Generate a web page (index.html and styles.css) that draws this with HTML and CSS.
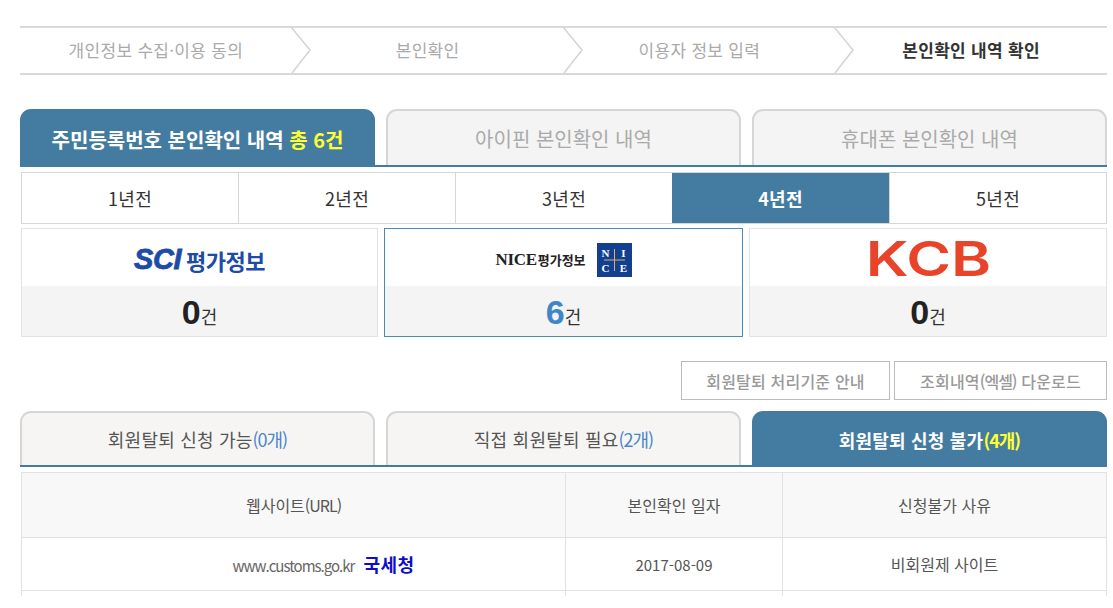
FILE: index.html
```html
<!DOCTYPE html>
<html lang="ko">
<head>
<meta charset="utf-8">
<title>본인확인 내역 확인</title>
<link rel="stylesheet" href="styles.css">
</head>
<body>
<div class="page">
  <ol class="steps">
    <li class="step">개인정보 수집·이용 동의<svg class="chev" width="22" height="46" viewBox="0 0 22 46"><path d="M1 0 L20 23 L2 46" fill="none" stroke="#d4d4d4" stroke-width="1.5"/></svg></li>
    <li class="step">본인확인<svg class="chev" width="22" height="46" viewBox="0 0 22 46"><path d="M1 0 L20 23 L2 46" fill="none" stroke="#d4d4d4" stroke-width="1.5"/></svg></li>
    <li class="step">이용자 정보 입력<svg class="chev" width="22" height="46" viewBox="0 0 22 46"><path d="M1 0 L20 23 L2 46" fill="none" stroke="#d4d4d4" stroke-width="1.5"/></svg></li>
    <li class="step step-on">본인확인 내역 확인</li>
  </ol>

  <div class="tabs tabs-main">
    <div class="tab tab-on">주민등록번호 본인확인 내역&nbsp;<em class="hl">총 6건</em></div>
    <div class="tab">아이핀 본인확인 내역</div>
    <div class="tab">휴대폰 본인확인 내역</div>
  </div>

  <div class="years">
    <div class="year">1년전</div>
    <div class="year">2년전</div>
    <div class="year">3년전</div>
    <div class="year year-on">4년전</div>
    <div class="year">5년전</div>
  </div>

  <div class="cards">
    <div class="card">
      <div class="logo logo-sci"><span class="sci-a">SCI</span><span class="sci-b">평가정보</span></div>
      <div class="count"><b>0</b>건</div>
    </div>
    <div class="card card-on">
      <div class="logo logo-nice">
        <span class="nice-a">NICE</span><span class="nice-b">평가정보</span>
        <svg class="nice-mark" width="35" height="34" viewBox="0 0 35 34">
          <rect width="35" height="34" fill="#123f8f"/>
          <path d="M17.5 6V28M7 17H28" stroke="#d9b45a" stroke-width="1"/>
          <text x="8.500" y="14" class="nice-t">N</text>
          <text x="26.500" y="14" class="nice-t">I</text>
          <text x="8.500" y="29" class="nice-t">C</text>
          <text x="26.500" y="29" class="nice-t">E</text>
        </svg>
      </div>
      <div class="count count-on"><b>6</b>건</div>
    </div>
    <div class="card">
      <div class="logo logo-kcb"><span class="kcb">KCB</span></div>
      <div class="count"><b>0</b>건</div>
    </div>
  </div>

  <div class="actions">
    <a class="btn btn-a">회원탈퇴 처리기준 안내</a>
    <a class="btn btn-b"><span>조회내역<span class="tight">(엑셀)</span> 다운로드</span></a>
  </div>

  <div class="tabs tabs-sub">
    <div class="tab">회원탈퇴 신청 가능<span class="num">(0개)</span></div>
    <div class="tab">직접 회원탈퇴 필요<span class="num">(2개)</span></div>
    <div class="tab tab-on">회원탈퇴 신청 불가<span class="num-on">(4개)</span></div>
  </div>

  <table class="list">
    <colgroup><col class="c1"><col class="c2"><col class="c3"></colgroup>
    <thead>
      <tr><th>웹사이트<span class="tight">(URL)</span></th><th>본인확인 일자</th><th>신청불가 사유</th></tr>
    </thead>
    <tbody>
      <tr><td class="site"><span class="url">www.customs.go.kr</span><strong class="org">국세청</strong></td><td class="date">2017-08-09</td><td>비회원제 사이트</td></tr>
      <tr class="cut"><td></td><td></td><td></td></tr>
    </tbody>
  </table>
</div>
</body>
</html>
```
FILE: styles.css
```css
* { box-sizing: border-box; }
html, body { margin: 0; padding: 0; background: #fff; }
body {
  font-family: "Noto Sans CJK KR", "Noto Sans", sans-serif;
  color: #333;
}
.page {
  width: 1113px;
  height: 596px;
  padding: 26px 6px 0 20px;
  overflow: hidden;
}

.steps {
  list-style: none;
  margin: 0;
  padding: 0;
  height: 49px;
  display: grid;
  grid-template-columns: repeat(4, 1fr);
  border-top: 2px solid #d9d9d9;
  border-bottom: 2px solid #d9d9d9;
}
.step {
  position: relative;
  display: flex;
  align-items: center;
  justify-content: center;
  padding-bottom: 2px;
  font-size: 17px;
  letter-spacing: 0.3px;
  color: #aaa;
}
.step-on { color: #333; font-weight: 700; }
.chev { position: absolute; right: -20px; top: -1px; }

.tabs { display: grid; grid-template-columns: repeat(3, 355px); column-gap: 11px; }
.tabs-main { height: 58px; margin-top: 34px; border-bottom: 2px solid #437ca0; }
.tabs-sub { height: 56px; margin-top: 11px; border-bottom: 2px solid #437ca0; }
.tab {
  display: flex;
  align-items: center;
  justify-content: center;
  border: 2px solid #d6d6d6;
  border-bottom: 0;
  border-radius: 11px 11px 0 0;
  background: #f4f4f4;
  color: #aaa;
  font-size: 20px;
}
.tabs .tab-on {
  background: #437ca0;
  border-color: #437ca0;
  color: #fff;
  font-weight: 700;
  margin-bottom: -2px;
}
.hl { font-style: normal; color: #ffff33; }
.tabs-sub .tab { font-size: 18px; color: #555; background: #f6f5f3; letter-spacing: 0.2px; }
.tabs-sub .tab-on { color: #fff; background: #437ca0; }
.num { color: #4a86c8; letter-spacing: -1px; }
.num-on { color: #ffff33; letter-spacing: -1px; }

.years {
  display: grid;
  grid-template-columns: 216px 217px 217px 217px 1fr;
  height: 52px;
  margin: 5px 0 0 1px;
  border: 1px solid #d6d6d6;
}
.year {
  display: flex;
  align-items: center;
  justify-content: center;
  font-size: 18px;
  letter-spacing: 0.3px;
  color: #333;
  border-left: 1px solid #d6d6d6;
}
.year:first-child { border-left: 0; }
.year-on { background: #437ca0; color: #fff; font-weight: 700; border-left: 0; }

.cards {
  display: grid;
  grid-template-columns: 357px 359px 358px;
  column-gap: 6px;
  height: 108px;
  margin: 4px 0 0 1px;
}
.card { display: flex; flex-direction: column; border: 1px solid #e2e2e2; background: #fff; }
.card-on { border-color: #4a8ab8; }
.logo { height: 57px; display: flex; align-items: center; justify-content: center; }
.count {
  flex: 1;
  display: flex;
  align-items: baseline;
  justify-content: center;
  padding-top: 6px;
  background: #f4f4f4;
  font-size: 18px;
  line-height: 40px;
  color: #333;
}
.count b { font: 700 34px/40px "Liberation Sans", sans-serif; color: #222; }
.count-on b { color: #3f86c8; }

.logo-sci { gap: 5px; color: #1d4ba6; padding-top: 4px; }
.sci-a { font: italic 900 29px/1 "Liberation Sans", sans-serif; -webkit-text-stroke: 0.8px #1d4ba6; letter-spacing: -0.5px; }
.sci-b { font-size: 22px; font-weight: 700; letter-spacing: -0.5px; }
.logo-nice { padding-top: 4px; }
.nice-a { font: 700 17px/1 "Liberation Serif", serif; color: #222; letter-spacing: -0.3px; }
.nice-b { font: 700 13px/1 "Noto Sans CJK KR", serif; color: #222; margin-left: 1px; }
.nice-mark { margin-left: 11px; }
.nice-t { font: 700 11px "Liberation Serif", serif; fill: #fff; text-anchor: middle; }
.logo-kcb { padding-top: 2px; }
.kcb {
  display: inline-block;
  font: 600 48px/1 "Inter", sans-serif;
  color: #e8442a;
  transform: scaleX(1.27);
}

.actions { display: flex; justify-content: flex-end; gap: 4px; height: 39px; margin-top: 25px; }
.btn {
  display: flex;
  align-items: center;
  justify-content: center;
  border: 1px solid #bbb;
  font-size: 16px;
  font-weight: 500;
  letter-spacing: 0.2px;
  color: #999;
}
.btn-a { width: 209px; }
.btn-b { width: 213px; }
.tight { letter-spacing: -1px; }

.list {
  width: 1086px;
  margin: 5px 0 0 1px;
  border-collapse: collapse;
  table-layout: fixed;
  font-size: 16px;
  color: #555;
}
.c1 { width: 544px; }
.c2 { width: 217px; }
.list th, .list td { border: 1px solid #e2e2e2; padding: 0; text-align: center; }
.list th { height: 65px; background: #f8f8f8; font-weight: 400; font-size: 16px; }
.list td { height: 53px; }
.list .site { padding-left: 60px; }
.list .date { font-size: 15px; }
.url { letter-spacing: -1px; color: #666; font-size: 15px; }
.org { margin-left: 9px; color: #0c0ccc; font-size: 18px; font-weight: 700; letter-spacing: 0.5px; }
.list .cut td { height: 20px; }
```
